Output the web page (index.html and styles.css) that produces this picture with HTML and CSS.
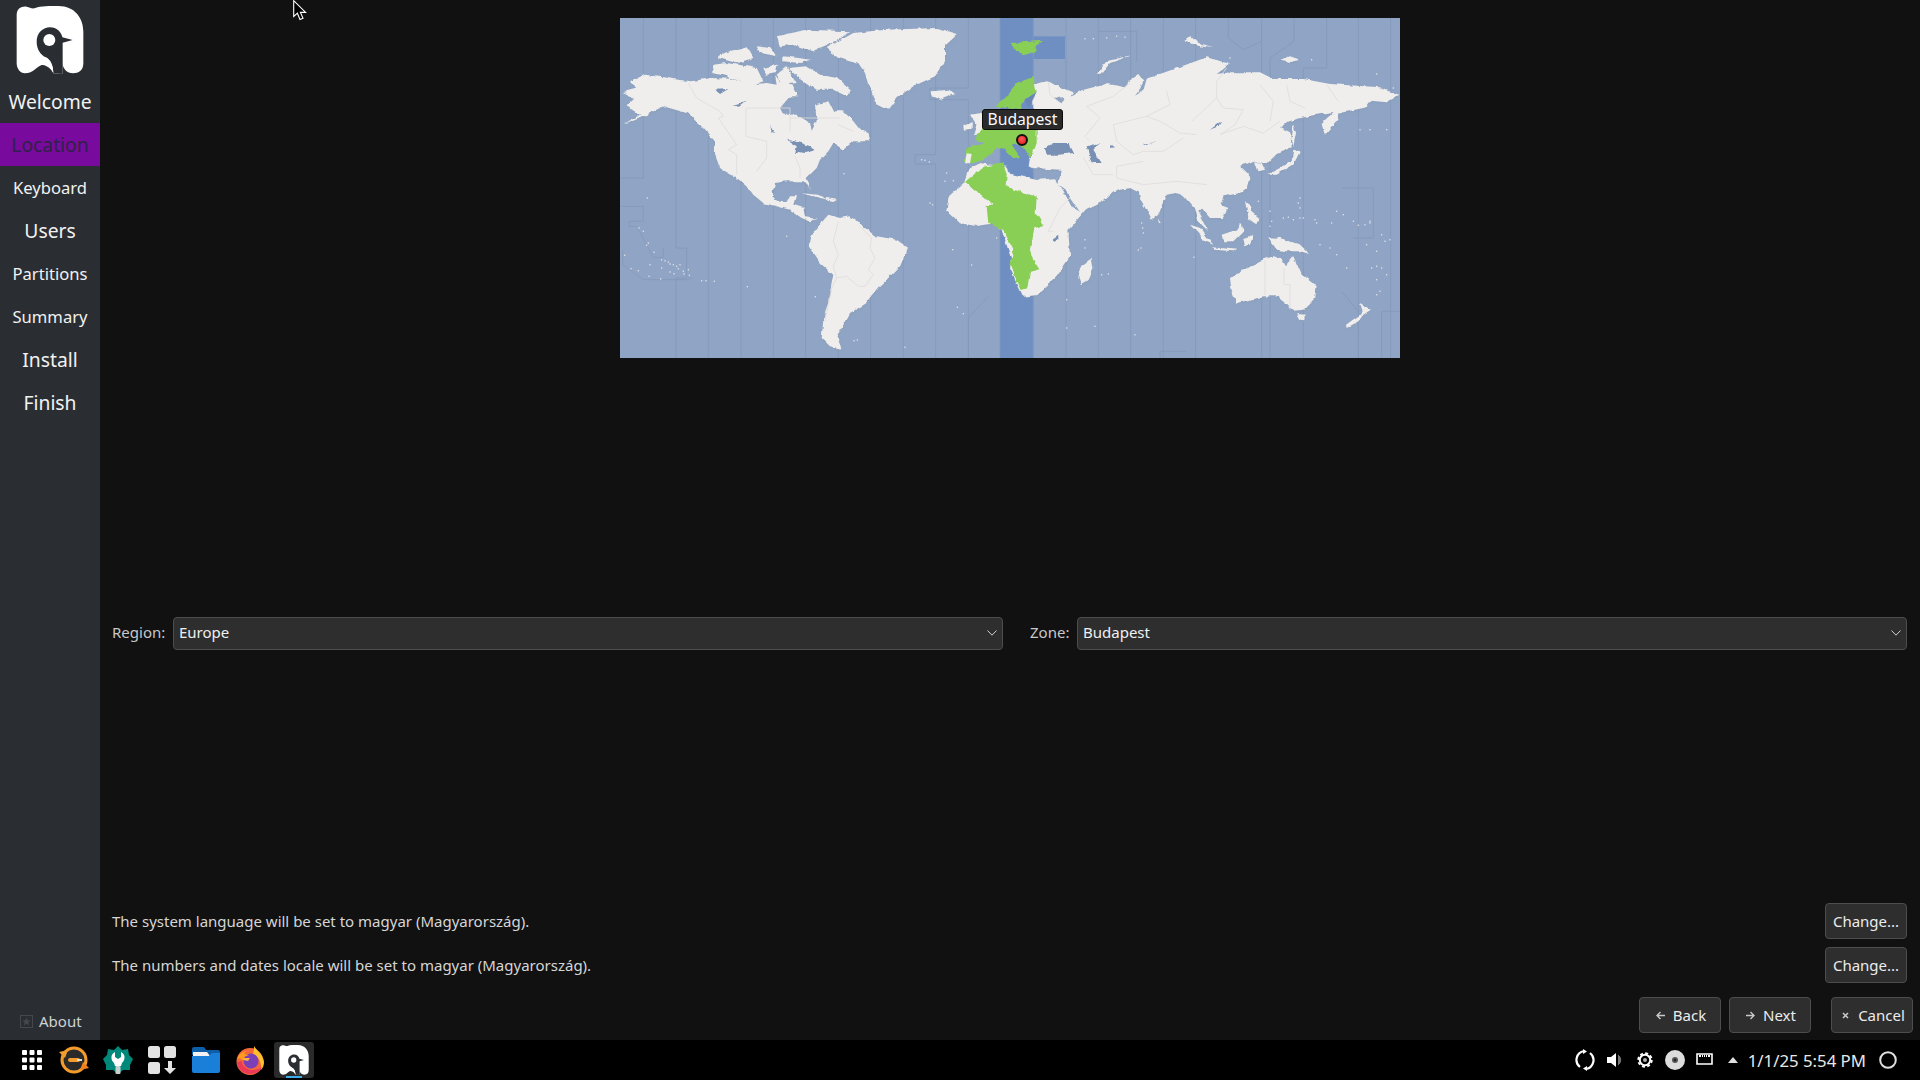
FILE: index.html
```html
<!DOCTYPE html>
<html lang="en">
<head>
    <meta charset="UTF-8">
    <title>Installer - Location</title>
    <link rel="stylesheet" href="styles.css">
</head>
<body>
    <svg class="defs" width="0" height="0">
        <symbol id="logo" viewBox="48 18 204 204">
            <path class="logo-body" d="M50 45C50 26 64 18 80 20C90 22 96 28 106 24C122 18 150 18 175 18C225 18 250 55 250 95L250 190C250 212 235 220 220 220C200 220 188 205 188 190L188 222L160 220C150 200 135 195 125 195C112 198 100 220 75 220C60 220 50 205 50 190Z"/>
            <path class="logo-cut" d="M110 125C110 98 130 82 150 82C170 82 184 96 187 112L218 120L188 128L188 222L160 220C160 195 152 180 138 172C122 165 110 148 110 125Z"/>
            <circle class="logo-body" cx="148" cy="120" r="18"/>
            <path class="logo-body" d="M112 150C120 165 130 172 142 176C155 185 158 200 160 218C150 198 140 188 128 184C118 176 112 165 112 150Z"/>
        </symbol>
    </svg>

    <div class="app">
        <nav class="sidebar">
            <svg class="logo" width="68" height="68"><use href="#logo"/></svg>
            <ul class="steps">
                <li class="step big">Welcome</li>
                <li class="step big active">Location</li>
                <li class="step">Keyboard</li>
                <li class="step big">Users</li>
                <li class="step">Partitions</li>
                <li class="step">Summary</li>
                <li class="step big">Install</li>
                <li class="step big">Finish</li>
            </ul>
            <div class="about">
                <svg width="13" height="13" viewBox="0 0 13 13"><rect x="0.5" y="0.5" width="12" height="12" fill="none" stroke="#44484c"/><path d="M6.5 2.6l1.2 2.6 2.8.3-2.1 1.9.6 2.8-2.5-1.4-2.5 1.4.6-2.8-2.1-1.9 2.8-.3z" fill="#44484c"/></svg>
                <span>About</span>
            </div>
        </nav>

        <main class="page">
            <div class="map">
                <svg width="780" height="340" viewBox="0 0 2340 1020">
                    <defs>
                        <filter id="rough" x="-2%" y="-2%" width="104%" height="104%" filterUnits="objectBoundingBox">
                            <feTurbulence type="fractalNoise" baseFrequency="0.04" numOctaves="3" seed="4" result="noise"/>
                            <feDisplacementMap in="SourceGraphic" in2="noise" scale="13" xChannelSelector="R" yChannelSelector="G"/>
                            <feGaussianBlur stdDeviation="0.9"/>
                        </filter>
                    </defs>
                    <rect width="2340" height="1020" fill="#90a5c5"/>
                    <rect x="1140" width="100" height="1020" fill="#6f8fc3"/>
                    <rect x="1240" y="55" width="95" height="68" fill="#6f8fc3"/>
                    <path class="zones" d="M70 0V480H0M168 0V690M168 690H200V780H168V1020M265 0V1020M363 0V1020M460 0V1020M557 0V1020M655 0V1020M752 0V1020M850 0V1020M947 0V410H885V438H947V1020M1045 0V210H930V245H1045V1020M1140 0V1020M1240 0V1020M1338 0V1020M1435 0V40H1550V130M1435 40V1020M1532 0V1020M1630 0V1020M1727 0V1020M1825 0V60L1870 95L1925 70V0M1925 70V1020M2022 0V70L1950 120V1020M2120 0V150H2050V1020M2215 0V1020M2312 0V1020M0 565H70V610H28V625H50L100 718H130V690M8 695V740L70 785H200L215 780M1105 835L1045 900V1020M2165 820L2215 880V1020M2340 880H2285V1020M1620 1020V1000H1700M2165 510H2260V660H2200" />
                    <g class="land">
                        <!-- north america -->
                        <path d="M8 222L45 212L30 190L75 170L130 178L175 185L215 190L270 180L330 182L390 200L440 195L470 200L465 170L480 190L520 205L535 235L510 235L480 270L490 290L530 290L570 315L575 338L590 310L585 260L625 250L640 280L670 280L700 310L720 335L745 345L750 370L700 370L670 395L640 375L625 400L600 425L590 450L560 480L572 512L550 490L500 490L465 495L458 520L462 540L480 552L500 552L510 532L528 532L520 560L550 570L555 598L590 602L570 610L545 600L510 575L470 565L430 555L400 530L385 510L345 475L300 450L285 410L285 370L240 320L200 285L130 265L60 300L10 320L60 290L20 265L45 240Z"/>
                        <path d="M620 90L700 45L800 35L950 30L1010 48L975 80L975 130L945 175L880 205L830 240L805 272L770 255L745 200L735 165L715 135L650 115Z"/>
                        <path d="M470 55L560 35L690 40L650 70L580 100L520 80L480 85Z"/>
                        <path d="M280 140L320 135L410 150L430 190L390 205L320 175L280 165Z"/>
                        <path d="M295 110L380 85L400 120L350 135L295 120Z"/>
                        <path d="M410 85L450 90L470 115L420 105Z"/>
                        <path d="M490 115L575 125L540 135L490 130Z"/>
                        <path d="M430 150L470 140L465 165L440 170Z"/>
                        <path d="M470 170L500 145L530 195L490 200Z"/>
                        <path d="M505 150L560 145L600 170L650 180L690 215L680 235L640 215L590 215L560 195L530 175Z"/>
                        <path d="M935 220L990 215L1005 228L960 245L935 235Z"/>
                        <path d="M1050 290L1085 285L1095 345L1060 348L1070 320Z"/>
                        <path d="M1030 325L1055 312L1055 335L1032 338Z"/>
                        <path d="M545 525L590 530L630 545L600 540Z"/>
                        <path d="M620 540L650 546L640 552L622 548Z"/>
                        <!-- south america -->
                        <path d="M570 660L595 625L625 590L660 600L690 595L725 620L770 655L830 665L865 690L840 745L810 775L775 810L740 855L715 870L690 885L665 930L650 955L665 992L630 985L605 960L610 905L625 850L640 770L600 735L565 685Z"/>
                        <!-- africa -->
                        <path d="M1035 491L985 536L980 576L1020 616L1070 624L1120 616L1145 636L1175 726L1170 751L1210 836L1250 831L1310 776L1350 716L1345 636L1430 536L1380 581L1355 566L1305 481L1250 486L1165 466L1160 446L1080 436L1050 451Z"/>
                        <!-- eurasia -->
                        <path d="M1240 198L1280 190L1360 223L1340 253L1315 233L1300 238L1325 253L1380 218L1420 208L1460 198L1520 208L1525 188L1555 168L1570 188L1560 213L1545 233L1570 218L1580 183L1620 168L1690 143L1760 118L1830 138L1790 168L1830 163L1920 163L1960 183L2050 183L2130 198L2210 203L2280 208L2335 233L2300 253L2255 248L2240 268L2170 283L2130 283L2070 293L2010 308L1980 328L2010 343L2015 388L1970 408L1940 438L1905 428L1860 443L1890 473L1880 510L1860 525L1810 535L1800 560L1825 570L1805 600L1770 600L1745 570L1735 580L1765 640L1735 610L1725 570L1690 530L1665 525L1640 530L1615 590L1595 605L1565 550L1560 525L1530 510L1480 520L1480 520L1450 548L1380 582L1335 515L1315 500L1325 455L1240 450L1232 430L1240 410L1225 395L1240 345Z"/>
                        <path d="M1430 170L1460 130L1540 110L1470 135L1445 170Z"/>
                        <path d="M2105 315L2160 265L2155 305L2115 350Z"/>
                        <path d="M2020 320L2028 345L2020 385L2015 365Z"/>
                        <path d="M1905 430L1925 435L1935 455L1915 460Z"/>
                        <path d="M1940 470L1980 450L2015 425L2020 395L2040 400L2020 440L1970 470Z"/>
                        <path d="M1690 65L1715 55L1740 80L1780 90L1735 85Z"/>
                        <path d="M1985 125L2010 115L2040 125L2010 132Z"/>
                        <path d="M1230 420L1245 435L1240 452L1226 445Z"/>
                        <!-- indonesia and oceania -->
                        <path d="M1380 750L1415 722L1420 750L1405 785L1382 798L1375 780Z"/>
                        <path d="M1615 600L1625 615L1620 615Z"/>
                        <path d="M1710 620L1740 630L1780 680L1755 670Z"/>
                        <path d="M1780 688L1850 695L1840 700L1785 695Z"/>
                        <path d="M1805 650L1850 635L1865 615L1870 640L1840 670L1810 670Z"/>
                        <path d="M1870 660L1900 650L1890 680L1875 685Z"/>
                        <path d="M1875 550L1890 560L1892 580L1915 600L1910 618L1885 600L1880 575Z"/>
                        <path d="M1945 658L1980 660L2040 680L2070 708L2040 700L2000 700L1970 695Z"/>
                        <path d="M1830 780L1890 745L1920 728L1960 715L1980 720L1995 745L2020 715L2045 770L2090 805L2085 840L2050 875L2020 878L1995 855L1970 835L1930 835L1890 845L1850 855L1835 820Z"/>
                        <path d="M2032 888L2060 890L2050 910L2038 908Z"/>
                        <path d="M2220 855L2252 875L2230 890L2215 910L2180 930L2178 920L2220 890L2228 880Z"/>
                    </g>
                    <g class="green">
                        <path d="M1130 266L1190 196L1240 176L1250 221L1215 246L1200 276Z"/>
                        <path d="M1065 361L1085 331L1190 316L1250 316L1250 376L1235 416L1230 426L1215 391L1185 376L1175 381L1200 416L1180 421L1150 391L1130 391L1090 426L1055 436L1035 431L1035 396L1090 376Z"/>
                        <path d="M1035 491L1090 446L1150 436L1160 471L1157 506L1250 536L1247 586L1270 621L1240 631L1230 696L1240 726L1258 754L1230 761L1222 811L1205 816L1185 776L1172 736L1180 696L1150 636L1105 616L1100 566L1120 561Z"/>
                        <path d="M1170 75L1220 72L1270 68L1245 85L1250 100L1210 108L1190 100Z"/>
                    </g>
                    <path class="land-plain" d="M1040 406L1055 408L1050 436L1035 436Z"/>
                    <g class="water">
                        <path d="M500 365L545 375L570 385L590 395L555 405L535 402L525 410L530 385Z"/>
                        <path d="M285 215L325 213L300 228Z"/>
                        <path d="M335 262L380 248L360 263Z"/>
                        <path d="M450 320L465 345L455 342Z"/>
                        <path d="M1275 390L1300 375L1345 375L1360 405L1320 410L1280 410Z"/>
                        <path d="M1400 385L1440 375L1420 395L1445 435L1415 435Z"/>
                        <path d="M1770 335L1805 308L1795 325Z"/>
                        <path d="M1475 380L1485 388L1472 390Z"/>
                        <path d="M1570 380L1608 372L1572 384Z"/>
                        <path d="M1300 660L1315 650L1315 665L1302 668Z"/>
                    </g>
                    <path class="baltic" d="M1215 246L1250 221L1235 251L1225 270Z"/>
                    <path class="borders" d="M205 195L230 240L300 280L310 295L295 300L350 380L325 395L350 410L350 470M378 270V355L440 370L440 420L410 460M378 270H510V340M510 300H660M655 320L700 340M525 415L540 450V480M1285 190L1290 230L1315 250M1400 265L1480 235L1530 195M1400 265L1440 300L1395 355L1410 370M1480 320L1580 295L1650 260L1640 220M1580 295L1620 310L1680 345L1730 350M1715 310L1790 240L1810 270L1870 275L1845 320L1800 350L1870 325L1930 345L1980 310M1790 240V190L1820 150M1920 200L1960 250L1950 310M2000 200L2010 250L2055 270M2120 200L2155 250M1480 320L1490 370L1540 410L1570 400L1630 400L1690 360M1570 430L1490 445L1490 480L1570 500L1670 490L1760 500M1390 420L1420 470L1480 470M655 610L640 670L655 710L640 745L650 780L635 810L615 910M720 625L755 660L750 690L765 720L745 755L760 770L735 805L715 805L680 775L650 780M1300 640L1285 640L1305 600L1320 570L1350 540M1935 725V830M1992 750V800H2010V875" />
                    <path class="dots" d="M905 425h0M915 427h0M928 432h0M980 465h0M672 467h0M975 490h0M1000 488h0M82 540h0M57 630h0M70 640h0M85 675h0M80 682h0M102 703h0M14 712h0M33 752h0M55 758h0M87 775h0M122 783h0M90 740h0M125 725h0M135 728h0M145 732h0M150 738h0M160 740h0M170 745h0M180 740h0M125 750h0M150 762h0M162 767h0M175 752h0M190 760h0M205 755h0M192 768h0M208 772h0M245 788h0M258 788h0M283 790h0M382 806h0M500 655h0M586 836h0M702 968h0M712 966h0M855 988h0M938 560h0M930 555h0M998 695h0M1012 868h0M1030 887h0M1055 741h0M1130 660h0M1340 845h0M1395 665h0M1395 690h0M1445 770h0M1465 768h0M1340 930h0M1425 925h0M1545 950h0M1555 696h0M1565 615h0M1568 630h0M1570 645h0M1563 690h0M1722 718h0M1998 830h0M1875 768h0M1950 580h0M1990 600h0M2005 598h0M2020 605h0M2040 600h0M2050 600h0M2085 605h0M2090 615h0M2135 615h0M2150 580h0M2170 590h0M2200 610h0M2215 622h0M2235 620h0M2250 610h0M2285 650h0M2250 615h0M2240 680h0M2295 670h0M2310 665h0M2270 700h0M2255 750h0M2270 745h0M2285 750h0M2300 770h0M2270 785h0M2280 820h0M2270 830h0M2040 540h0M2035 555h0M2040 570h0M1950 625h0M1955 610h0M2100 680h0M2130 690h0M2150 710h0M2180 750h0M1395 550h0M1915 550h0M1395 62h0M1420 62h0M1460 60h0M1490 55h0M1515 58h0M1830 120h0M1990 125h0M2075 125h0M2270 168h0M2320 210h0M2220 335h0M2250 335h0M2300 335h0" />
                </svg>
                <span class="map-tip">Budapest</span>
                <span class="map-pin"></span>
            </div>

            <div class="zone-row">
                <label>Region:</label>
                <div class="combo"><span>Europe</span><svg width="10" height="6" viewBox="0 0 10 6"><path d="M.5.5L5 5.2 9.5.5" fill="none" stroke="#d0d0d0"/></svg></div>
                <label class="zone-label">Zone:</label>
                <div class="combo"><span>Budapest</span><svg width="10" height="6" viewBox="0 0 10 6"><path d="M.5.5L5 5.2 9.5.5" fill="none" stroke="#d0d0d0"/></svg></div>
            </div>

            <div class="locale-row">
                <span>The system language will be set to magyar (Magyarország).</span>
                <button class="btn">Change...</button>
            </div>
            <div class="locale-row">
                <span>The numbers and dates locale will be set to magyar (Magyarország).</span>
                <button class="btn">Change...</button>
            </div>

            <div class="nav-row">
                <button class="btn"><svg width="9" height="9" viewBox="0 0 9 9"><path d="M4.5 1L1 4.5 4.5 8M1 4.5H9" fill="none" stroke="#c8c8c8" stroke-width="1.4"/></svg>Back</button>
                <button class="btn"><svg width="9" height="9" viewBox="0 0 9 9"><path d="M4.5 1L8 4.5 4.5 8M8 4.5H0" fill="none" stroke="#c8c8c8" stroke-width="1.4"/></svg>Next</button>
                <button class="btn cancel"><svg width="9" height="9" viewBox="0 0 9 9"><path d="M2 2L7 7M7 2L2 7" fill="none" stroke="#c8c8c8" stroke-width="1.6"/></svg>Cancel</button>
            </div>
        </main>
    </div>

    <footer class="taskbar">
        <svg class="launcher" width="20" height="20" viewBox="0 0 20 20" fill="#fff">
            <rect width="5" height="5" rx="1"/><rect x="7.5" width="5" height="5" rx="1"/><rect x="15" width="5" height="5" rx="1"/>
            <rect y="7.5" width="5" height="5" rx="1"/><rect x="7.5" y="7.5" width="5" height="5" rx="1"/><rect x="15" y="7.5" width="5" height="5" rx="1"/>
            <rect y="15" width="5" height="5" rx="1"/><rect x="7.5" y="15" width="5" height="5" rx="1"/><rect x="15" y="15" width="5" height="5" rx="1"/>
        </svg>
        <svg class="task-icon" width="30" height="30" viewBox="0 0 30 30">
            <circle cx="15" cy="15" r="12" fill="#2a2a2a" stroke="#f39c2e" stroke-width="3"/>
            <path d="M0 7L9 5L6 13Z" fill="#f39c2e"/><path d="M30 23L21 25L24 17Z" fill="#f0801e"/>
            <rect x="9" y="13" width="12" height="4" rx="2" fill="#f39c2e"/><rect x="18" y="14" width="5" height="2" fill="#ddd"/>
        </svg>
        <svg class="task-icon" width="30" height="30" viewBox="0 0 30 30">
            <path d="M15 1L19 5L25 4L26 10L30 14L27 20L27 25L20 25L15 29L10 25L3 25L3 20L0 14L4 10L5 4L11 5Z" fill="#00897b"/>
            <path d="M12 7V12L15 14L18 12V7C22 9 23 14 19 18L18 21H12L11 18C7 14 8 9 12 7Z" fill="#fff"/>
            <rect x="12.5" y="21" width="5" height="8" rx="1" fill="#c8d0cf"/>
        </svg>
        <svg class="task-icon" width="30" height="30" viewBox="0 0 30 30" fill="#e2e2e2">
            <rect x="1" y="1" width="12" height="12" rx="2.5"/><rect x="17" y="1" width="12" height="12" rx="2.5"/><rect x="1" y="17" width="12" height="12" rx="2.5"/>
            <path d="M21 16H25V23H29L23 29L17 23H21Z"/>
        </svg>
        <svg class="task-icon" width="30" height="30" viewBox="0 0 30 30">
            <path d="M1 4Q1 2 3 2H13L15 5H27Q29 5 29 7V10H1Z" fill="#0d5ea8"/>
            <path d="M2 7H16L19 11H2Z" fill="#f2f2f2"/>
            <path d="M1 11H18L21 8H29V26Q29 28 27 28H3Q1 28 1 26Z" fill="#1a7fd8"/>
        </svg>
        <svg class="task-icon" width="30" height="30" viewBox="0 0 30 30">
            <circle cx="15" cy="16.5" r="13.5" fill="#f4683a"/>
            <path d="M19 1C21 5 28 9 29 17C29 20 28 23 26 25C27 17 23 11 18 9C19 6 19 3 19 1Z" fill="#ffc02e"/>
            <circle cx="16" cy="16" r="7.5" fill="#7b3fb8"/>
            <path d="M2 14C4 9 7 7 11 6L9 9L14 10C11 11 8 12 8 15C5 13 3 13 2 14Z" fill="#ff9a1f"/>
            <path d="M8 13L15 13L13 16L8 15Z" fill="#ffb13d"/>
            <path d="M2 17C3 25 9 29 15 29C21 29 25 26 27 22C23 25 15 27 10 22C7 20 7 18 7 16Z" fill="#ea3a58"/>
        </svg>
        <div class="task-active">
            <svg width="30" height="30"><use href="#logo"/></svg>
            <span class="task-bar"></span>
        </div>

        <div class="tray">
            <svg width="20" height="22" viewBox="0 0 20 22" fill="none" stroke="#fff" stroke-width="2.2">
                <path d="M9 2A9 9 0 0 0 5 18M11 20A9 9 0 0 0 15 4"/>
                <path d="M8 0V5L12 2.5ZM12 22V17L8 19.5Z" fill="#fff" stroke="none"/>
            </svg>
            <svg class="tray-sound" width="18" height="16" viewBox="0 0 18 16">
                <path d="M0 5H4L9 1V15L4 11H0Z" fill="#fff"/>
                <path d="M11 3A6 6 0 0 1 11 13" fill="#777" stroke="#777"/>
            </svg>
            <svg class="tray-gear" width="16" height="16" viewBox="0 0 16 16" fill="none" stroke="#fff">
                <circle cx="8" cy="8" r="5.2" stroke-width="2"/><circle cx="8" cy="8" r="6.8" stroke-width="1.8" stroke-dasharray="3 2.34"/>
                <circle cx="8" cy="8" r="2" fill="#aaa" stroke="none"/>
            </svg>
            <svg class="tray-disc" width="20" height="20" viewBox="0 0 20 20">
                <circle cx="10" cy="10" r="10" fill="#dcdcdc"/><circle cx="10" cy="10" r="3" fill="#555"/><circle cx="10" cy="10" r="1.2" fill="#222"/>
            </svg>
            <svg width="17" height="14" viewBox="0 0 17 14">
                <path d="M1 1H16V11H1Z" fill="none" stroke="#fff" stroke-width="1.6"/>
                <path d="M3 2V4H5V2ZM6 2V4H7V2ZM8 2V4H9V2ZM10 2V4H11V2ZM12 2V4H14V2Z" fill="#fff"/>
            </svg>
            <svg class="caret" width="10" height="6" viewBox="0 0 10 6"><path d="M0 6L5 0L10 6Z" fill="#e0e0e0"/></svg>
            <span class="clock">1/1/25 5:54 PM</span>
            <svg class="power" width="18" height="18" viewBox="0 0 18 18"><circle cx="9" cy="9" r="7.8" fill="none" stroke="#e0e0e0" stroke-width="2"/></svg>
        </div>
    </footer>

    <svg class="cursor" width="14" height="21" viewBox="0 0 14 21"><path d="M.7 .7V16.5L4.4 13.2L7 19.5L10 18.2L7.4 12.4H12.6Z" fill="#000" stroke="#fff" stroke-width="1.1"/></svg>
</body>
</html>
```

FILE: styles.css
```css
* {
    box-sizing: border-box;
}
html, body {
    margin: 0;
    height: 100%;
    overflow: hidden;
}
body {
    display: flex;
    flex-direction: column;
    background: #111111;
    color: #e4e4e4;
    font-family: "Noto Sans", sans-serif;
    font-size: 15px;
}
.defs {
    position: absolute;
}
.logo-body {
    fill: #ffffff;
}
.logo-cut {
    fill: #2a2e32;
}
.app {
    flex: 1;
    display: flex;
    min-height: 0;
}

/* sidebar */
.sidebar {
    width: 100px;
    background: #2a2e32;
    display: flex;
    flex-direction: column;
    color: #f2f2f2;
}
.logo {
    margin: 6px 0 6px 16px;
    flex: none;
}
.steps {
    list-style: none;
    margin: 0;
    padding: 0;
}
.step {
    height: 43px;
    line-height: 43px;
    text-align: center;
    font-size: 16.6px;
}
.step.big {
    font-size: 19.3px;
}
.step.active {
    background: #780a9e;
    color: #2f2147;
}
.about {
    margin-top: auto;
    height: 34px;
    padding: 0 0 4px 20px;
    display: flex;
    align-items: center;
    gap: 6px;
    font-size: 15px;
    color: #cfd2d4;
}

/* main page */
.page {
    flex: 1;
    display: flex;
    flex-direction: column;
    padding: 18px 7px 7px 12px;
}
.map {
    position: relative;
    align-self: center;
    width: 780px;
    height: 340px;
    margin-left: -5px;
    flex: none;
}
.map svg {
    display: block;
}
.zones {
    fill: none;
    stroke: #8498b9;
    stroke-width: 2.4;
}
.land {
    fill: #f0eeed;
    filter: url(#rough) drop-shadow(2px 5px 4px rgba(60, 80, 110, .35));
}
.land-plain {
    fill: #f0eeed;
}
.green {
    fill: #8acf55;
    filter: url(#rough);
}
.water {
    fill: #7890b4;
    filter: url(#rough);
}
.baltic {
    fill: #6a86b5;
}
.borders {
    fill: none;
    stroke: #dedbd9;
    stroke-width: 2.4;
}
.dots {
    fill: none;
    stroke: #e6e6ea;
    stroke-width: 4.5;
    stroke-linecap: round;
}
.map-tip {
    position: absolute;
    left: 362px;
    top: 91px;
    width: 81px;
    height: 21px;
    line-height: 18px;
    background: #2a2a2a;
    border: 1px solid #0c0c0c;
    border-radius: 3px;
    text-align: center;
    color: #fafafa;
    font-size: 15.7px;
}
.map-pin {
    position: absolute;
    left: 396px;
    top: 116px;
    width: 12px;
    height: 12px;
    border-radius: 50%;
    border: 2px solid #111;
    background: radial-gradient(circle at 45% 35%, #ff5a5a, #dd1414);
}
.zone-row {
    margin-top: 259px;
    margin-right: 6px;
    height: 33px;
    line-height: 31px;
    display: flex;
    align-items: center;
    color: #c8c8c8;
}
.zone-row label {
    flex: none;
    width: 61px;
    margin-top: -2px;
}
.zone-row label.zone-label {
    width: 47px;
    margin-left: 27px;
}
.combo {
    flex: 1;
    height: 33px;
    padding: 0 5px 2px 5px;
    display: flex;
    align-items: center;
    justify-content: space-between;
    background: #2e2e2e;
    border: 1px solid #4d4d4d;
    border-radius: 4px;
    color: #f0f0f0;
}
.locale-row {
    display: flex;
    justify-content: space-between;
    align-items: center;
    height: 36px;
    margin-right: 6px;
    margin-bottom: 8px;
    color: #d6d6d6;
}
.zone-row + .locale-row {
    margin-top: auto;
}
.btn {
    width: 82px;
    height: 36px;
    padding: 0;
    display: flex;
    align-items: center;
    justify-content: center;
    gap: 8px;
    background: #2e2e2e;
    border: 1px solid #4d4d4d;
    border-radius: 4px;
    color: #ececec;
    font-family: inherit;
    font-size: 15px;
}
.nav-row {
    display: flex;
    justify-content: flex-end;
    gap: 8px;
    margin-top: 6px;
}
.nav-row .btn {
    padding-left: 2px;
}
.btn.cancel {
    margin-left: 12px;
}

/* taskbar */
.taskbar {
    flex: none;
    height: 40px;
    background: #000000;
    display: flex;
    align-items: center;
    padding-left: 22px;
}
.launcher {
    margin-right: 17px;
}
.task-icon {
    margin-right: 14px;
}
.task-active {
    position: relative;
    width: 40px;
    height: 36px;
    margin-left: -5px;
    background: #2a2a2a;
    border-radius: 3px;
    display: flex;
    align-items: center;
    justify-content: center;
}
.task-active .logo-cut {
    fill: #2a2a2a;
}
.task-bar {
    position: absolute;
    left: 12px;
    bottom: 0;
    width: 16px;
    height: 2px;
    background: #3daee9;
}
.tray {
    margin-left: auto;
    padding-right: 23px;
    display: flex;
    align-items: center;
    gap: 11px;
}
.tray-sound {
    margin-left: 1px;
}
.tray-gear {
    margin-left: 1px;
}
.tray-disc {
    margin-left: 1px;
}
.caret {
    margin-left: 4px;
}
.clock {
    margin-left: -1px;
    color: #e8e8e8;
    font-size: 16.8px;
    white-space: nowrap;
}
.power {
    margin-left: 2px;
}
.cursor {
    position: absolute;
    left: 293px;
    top: 0;
}
```
